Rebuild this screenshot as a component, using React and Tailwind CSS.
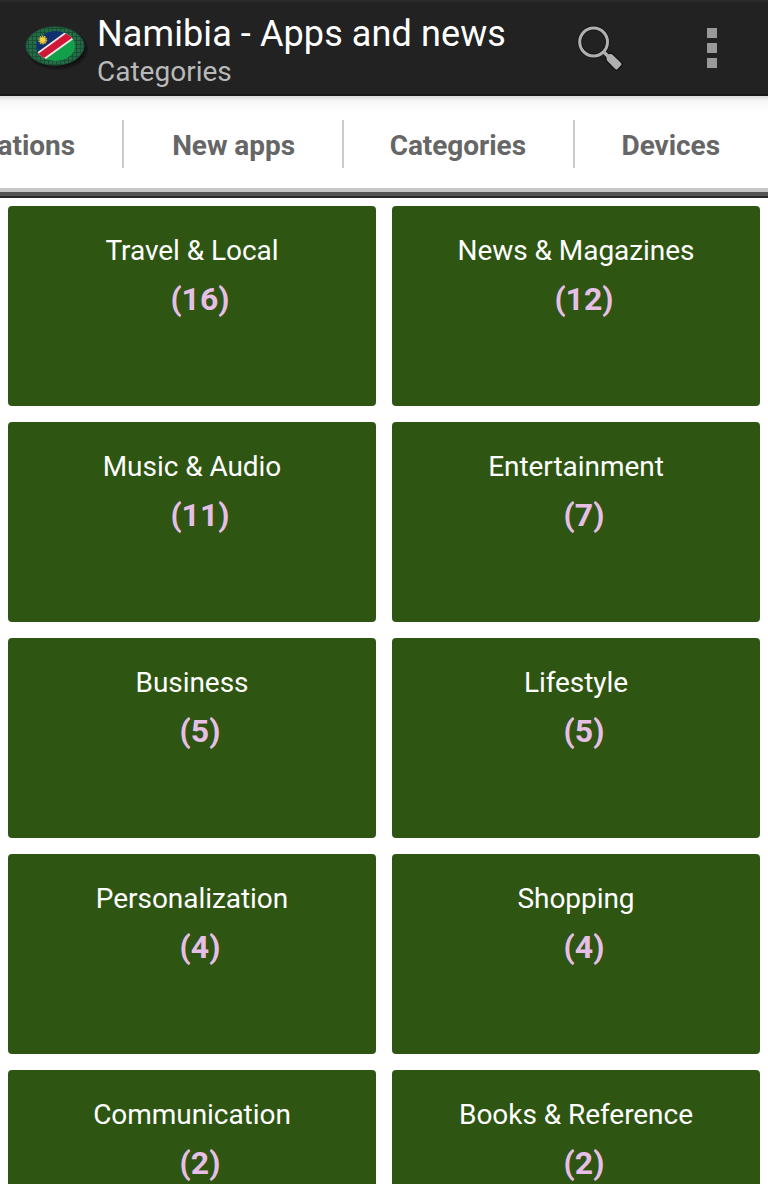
const tabs = [
  { label: 'ations', width: 'w-[172px]' },
  { label: 'New apps', width: 'w-[220px]' },
  { label: 'Categories', width: 'w-[231px]' },
  { label: 'Devices', width: 'w-[193px]' },
];

const categories = [
  { name: 'Travel & Local', count: 16 },
  { name: 'News & Magazines', count: 12 },
  { name: 'Music & Audio', count: 11 },
  { name: 'Entertainment', count: 7 },
  { name: 'Business', count: 5 },
  { name: 'Lifestyle', count: 5 },
  { name: 'Personalization', count: 4 },
  { name: 'Shopping', count: 4 },
  { name: 'Communication', count: 2 },
  { name: 'Books & Reference', count: 2 },
];

function FlagLogo() {
  return (
    <svg width="72" height="60" viewBox="0 0 72 60" className="shrink-0">
      <defs>
        <clipPath id="flag">
          <ellipse cx="31.5" cy="30" rx="19.5" ry="15" />
        </clipPath>
        <pattern id="mesh" width="4" height="4" patternUnits="userSpaceOnUse">
          <rect width="4" height="4" fill="#256b47" />
          <path d="M0 0H4M0 0V4" stroke="#174a32" strokeWidth="1.6" />
        </pattern>
        <filter id="soft" x="-20%" y="-20%" width="140%" height="140%">
          <feGaussianBlur stdDeviation="1.5" />
        </filter>
      </defs>
      <ellipse cx="33.5" cy="33" rx="29" ry="19" fill="#0f0f0f" filter="url(#soft)" />
      <ellipse cx="31" cy="30" rx="29" ry="19.2" fill="url(#mesh)" stroke="#1b5437" />
      <g clipPath="url(#flag)">
        <rect width="72" height="60" fill="#12a04a" />
        <path d="M0 0H62L6 45H0Z" fill="#10306e" />
        <path d="M9 39.5L44 14L56 18.5L19 45Z" fill="#f4e6e6" />
        <path d="M11.5 39.8L46.5 14.3L53.5 18L17.5 43.8Z" fill="#cf1836" />
      </g>
      <circle cx="18.7" cy="24" r="3.7" fill="none" stroke="#d9b92f" strokeWidth="1.6" strokeDasharray="1.6 0.7" />
      <circle cx="18.7" cy="24" r="3" fill="#f6d33c" />
    </svg>
  );
}

function SearchIcon() {
  return (
    <svg width="48" height="48" viewBox="0 0 48 48" fill="none">
      <circle cx="17.6" cy="18" r="13.9" stroke="#161616" strokeWidth="5" />
      <path
        d="M27 27L32 32M30.5 31.5Q30.5 30.7 31.5 30.4L34.6 30.1Q35.7 30 36.5 30.8L45 39Q46 40.2 45 41.3L41.5 44.9Q40.2 46 39 44.8L31.5 37Q30.6 36 30.6 35Z"
        stroke="#161616"
        strokeWidth="3"
      />
      <circle cx="17.6" cy="18" r="13.9" stroke="#b0b0b0" strokeWidth="3" />
      <path d="M27 27.2L32 32.2" stroke="#b0b0b0" strokeWidth="3.4" />
      <path
        d="M30.5 31.5Q30.5 30.7 31.5 30.4L34.6 30.1Q35.7 30 36.5 30.8L45 39Q46 40.2 45 41.3L41.5 44.9Q40.2 46 39 44.8L31.5 37Q30.6 36 30.6 35Z"
        fill="#b0b0b0"
      />
    </svg>
  );
}

function Header() {
  return (
    <header className="flex h-24 shrink-0 border-t-2 border-b-2 border-t-[#2b2b2b] border-b-[#181818] bg-[#222222]">
      <div className="ml-6 mt-3.5 w-[73px]">
        <FlagLogo />
      </div>
      <div className="grow whitespace-nowrap pt-[11px]">
        <h1 className="text-[36px] leading-[42px] tracking-[0.1px] text-white">Namibia - Apps and news</h1>
        <p className="text-[28px] leading-[33px] text-[#b9b9b9]">Categories</p>
      </div>
      <button className="mr-[83px] mt-[22px] h-12 w-12" aria-label="Search">
        <SearchIcon />
      </button>
      <button className="mr-[51px] mt-[26px] flex h-10 flex-col justify-between" aria-label="More">
        <span className="h-2.5 w-2.5 bg-[#999999]" />
        <span className="h-2.5 w-2.5 bg-[#999999]" />
        <span className="h-2.5 w-2.5 bg-[#999999]" />
      </button>
    </header>
  );
}

function TabBar() {
  return (
    <nav className="shrink-0">
      <div className="h-4 bg-linear-to-b from-[#d8d8d8] via-[#f6f6f6] via-30% to-white" />
      <div className="flex h-[76px] justify-end overflow-hidden pt-2">
        {tabs.map((tab) => (
          <div
            key={tab.label}
            className={`${tab.width} flex h-12 shrink-0 items-center justify-end border-r-2 border-[#cccccc] pt-1 pr-[47px] text-[28px] font-bold tracking-[-0.05px] text-[#666666] last:border-r-0 last:pr-12`}
          >
            {tab.label}
          </div>
        ))}
      </div>
      <div className="h-1 bg-[#c6c6c6]" />
      <div className="h-1 bg-[#555555]" />
      <div className="h-0.5 bg-[#292929]" />
    </nav>
  );
}

function CategoryTile({ name, count }) {
  return (
    <div className="h-[200px] rounded bg-[#2e5512] pt-7 text-center">
      <p className="text-[28px] leading-[33px] tracking-[-0.05px] text-white">{name}</p>
      <p className="mt-[13px] pl-4 text-[32px] leading-[38px] font-bold text-[#e6bfe6]">({count})</p>
    </div>
  );
}

export default function App() {
  return (
    <div className="flex h-[1184px] w-[768px] flex-col overflow-hidden bg-white font-[Roboto,sans-serif]">
      <Header />
      <TabBar />
      <main className="grid grid-cols-2 gap-4 p-2">
        {categories.map((category) => (
          <CategoryTile key={category.name} name={category.name} count={category.count} />
        ))}
      </main>
    </div>
  );
}
